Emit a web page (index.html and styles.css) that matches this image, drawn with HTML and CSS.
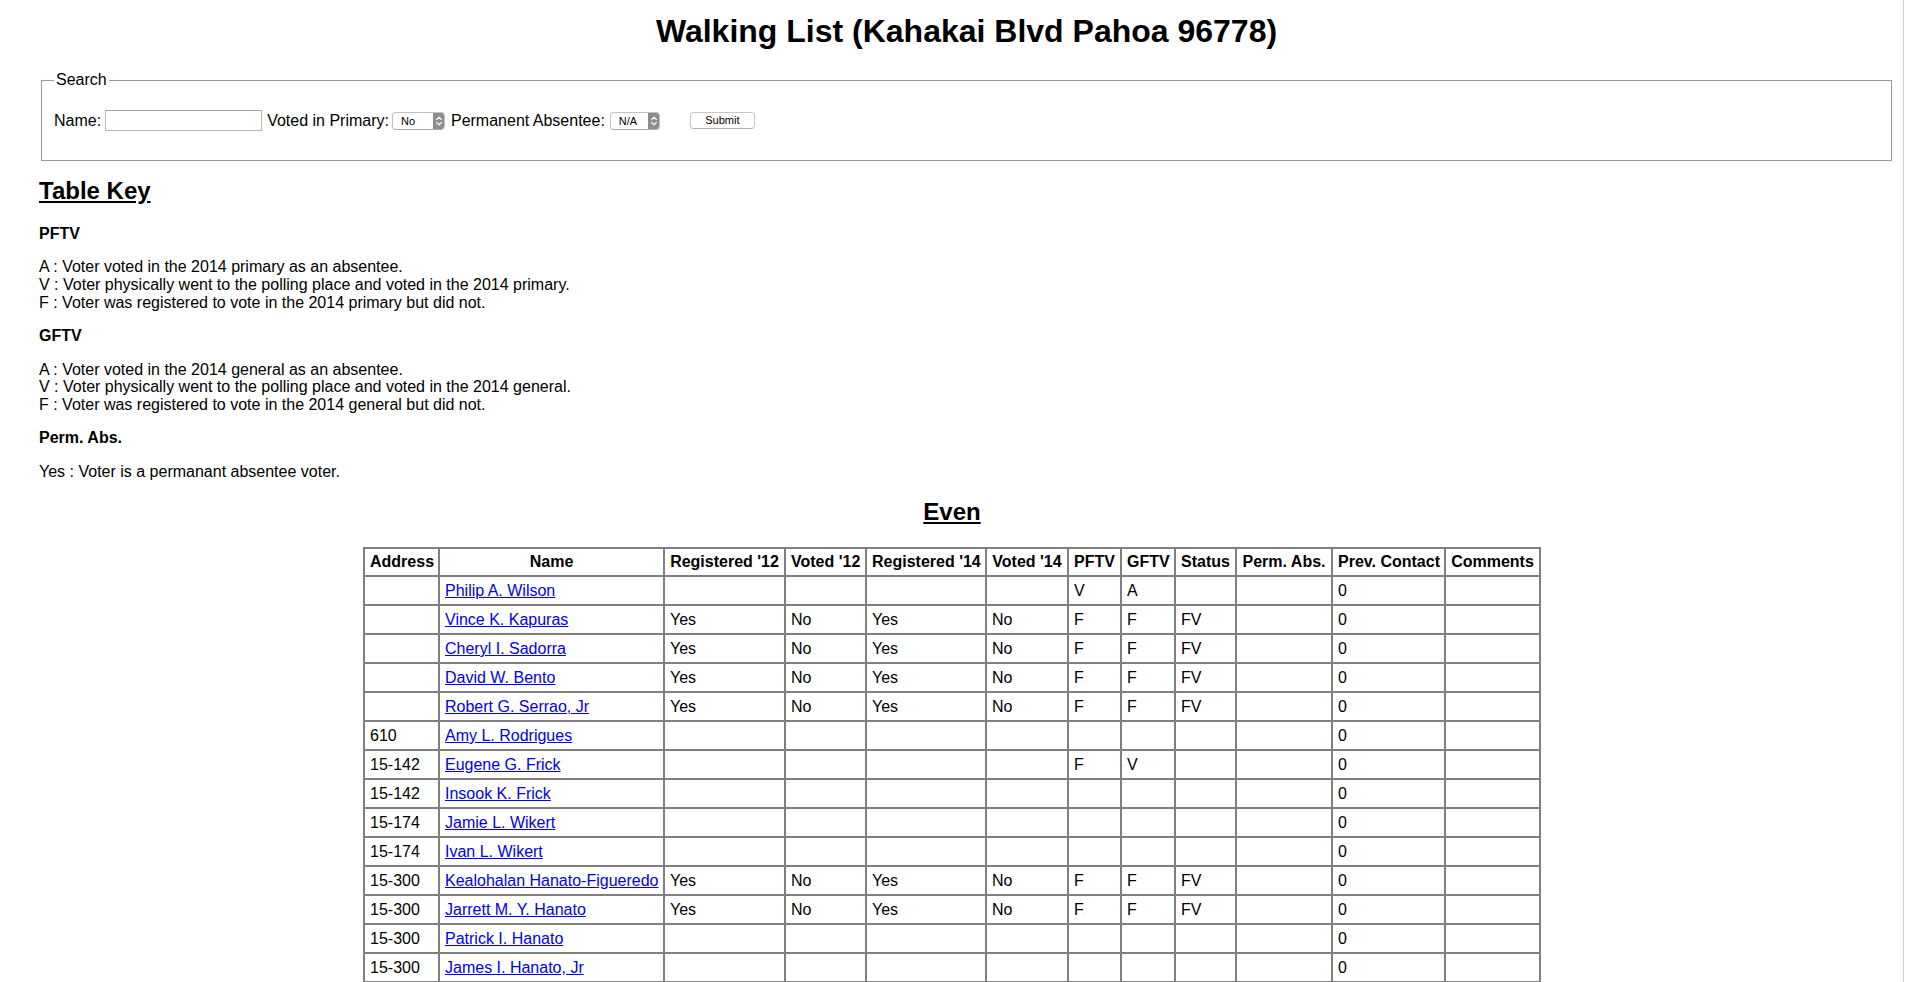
FILE: index.html
```html
<!DOCTYPE html>
<html lang="en">
<head>
<meta charset="utf-8">
<title>Walking List (Kahakai Blvd Pahoa 96778)</title>
<link rel="stylesheet" href="styles.css">
</head>
<body>
<div class="page">
  <h1 class="title">Walking List (Kahakai Blvd Pahoa 96778)</h1>

  <fieldset class="search">
    <legend>Search</legend>
    <form class="search-row" onsubmit="return false">
      <label class="lbl">Name:</label>
      <input class="name-input" type="text">
      <label class="lbl lbl-voted">Voted in Primary:</label>
      <span class="select sel-voted">
        <select><option>No</option><option>Yes</option></select>
        <span class="stepper"><svg width="12" height="18" viewBox="0 0 12 18"><path d="M3.5 7.6 L6 5.2 L8.5 7.6 M3.5 10.4 L6 12.8 L8.5 10.4" fill="none" stroke="#fff" stroke-width="1.2" stroke-linecap="round" stroke-linejoin="round"/></svg></span>
      </span>
      <label class="lbl lbl-perm">Permanent Absentee:</label>
      <span class="select sel-perm">
        <select><option>N/A</option><option>Yes</option><option>No</option></select>
        <span class="stepper"><svg width="12" height="18" viewBox="0 0 12 18"><path d="M3.5 7.6 L6 5.2 L8.5 7.6 M3.5 10.4 L6 12.8 L8.5 10.4" fill="none" stroke="#fff" stroke-width="1.2" stroke-linecap="round" stroke-linejoin="round"/></svg></span>
      </span>
      <button class="submit" type="submit">Submit</button>
    </form>
  </fieldset>

  <h2 class="key-title">Table Key</h2>
  <p class="term">PFTV</p>
  <p>A : Voter voted in the 2014 primary as an absentee.<br>V : Voter physically went to the polling place and voted in the 2014 primary.<br>F : Voter was registered to vote in the 2014 primary but did not.</p>
  <p class="term">GFTV</p>
  <p>A : Voter voted in the 2014 general as an absentee.<br>V : Voter physically went to the polling place and voted in the 2014 general.<br>F : Voter was registered to vote in the 2014 general but did not.</p>
  <p class="term">Perm. Abs.</p>
  <p>Yes : Voter is a permanant absentee voter.</p>

  <div class="table-wrap">
    <table class="walk">
      <caption>Even</caption>
      <thead>
        <tr>
          <th>Address</th><th>Name</th><th>Registered '12</th><th>Voted '12</th><th>Registered '14</th><th>Voted '14</th><th>PFTV</th><th>GFTV</th><th>Status</th><th>Perm. Abs.</th><th>Prev. Contact</th><th>Comments</th>
        </tr>
      </thead>
      <tbody>
        <tr><td></td><td><a href="#">Philip A. Wilson</a></td><td></td><td></td><td></td><td></td><td>V</td><td>A</td><td></td><td></td><td>0</td><td></td></tr>
        <tr><td></td><td><a href="#">Vince K. Kapuras</a></td><td>Yes</td><td>No</td><td>Yes</td><td>No</td><td>F</td><td>F</td><td>FV</td><td></td><td>0</td><td></td></tr>
        <tr><td></td><td><a href="#">Cheryl I. Sadorra</a></td><td>Yes</td><td>No</td><td>Yes</td><td>No</td><td>F</td><td>F</td><td>FV</td><td></td><td>0</td><td></td></tr>
        <tr><td></td><td><a href="#">David W. Bento</a></td><td>Yes</td><td>No</td><td>Yes</td><td>No</td><td>F</td><td>F</td><td>FV</td><td></td><td>0</td><td></td></tr>
        <tr><td></td><td><a href="#">Robert G. Serrao, Jr</a></td><td>Yes</td><td>No</td><td>Yes</td><td>No</td><td>F</td><td>F</td><td>FV</td><td></td><td>0</td><td></td></tr>
        <tr><td>610</td><td><a href="#">Amy L. Rodrigues</a></td><td></td><td></td><td></td><td></td><td></td><td></td><td></td><td></td><td>0</td><td></td></tr>
        <tr><td>15-142</td><td><a href="#">Eugene G. Frick</a></td><td></td><td></td><td></td><td></td><td>F</td><td>V</td><td></td><td></td><td>0</td><td></td></tr>
        <tr><td>15-142</td><td><a href="#">Insook K. Frick</a></td><td></td><td></td><td></td><td></td><td></td><td></td><td></td><td></td><td>0</td><td></td></tr>
        <tr><td>15-174</td><td><a href="#">Jamie L. Wikert</a></td><td></td><td></td><td></td><td></td><td></td><td></td><td></td><td></td><td>0</td><td></td></tr>
        <tr><td>15-174</td><td><a href="#">Ivan L. Wikert</a></td><td></td><td></td><td></td><td></td><td></td><td></td><td></td><td></td><td>0</td><td></td></tr>
        <tr><td>15-300</td><td><a href="#">Kealohalan Hanato-Figueredo</a></td><td>Yes</td><td>No</td><td>Yes</td><td>No</td><td>F</td><td>F</td><td>FV</td><td></td><td>0</td><td></td></tr>
        <tr><td>15-300</td><td><a href="#">Jarrett M. Y. Hanato</a></td><td>Yes</td><td>No</td><td>Yes</td><td>No</td><td>F</td><td>F</td><td>FV</td><td></td><td>0</td><td></td></tr>
        <tr><td>15-300</td><td><a href="#">Patrick I. Hanato</a></td><td></td><td></td><td></td><td></td><td></td><td></td><td></td><td></td><td>0</td><td></td></tr>
        <tr><td>15-300</td><td><a href="#">James I. Hanato, Jr</a></td><td></td><td></td><td></td><td></td><td></td><td></td><td></td><td></td><td>0</td><td></td></tr>
      </tbody>
    </table>
  </div>
</div>
</body>
</html>
```

FILE: styles.css
```css
html {
  scrollbar-width: none;
}
html::-webkit-scrollbar {
  display: none;
}
body {
  margin: 0;
  font-family: "Liberation Sans", Arial, Helvetica, sans-serif;
  font-size: 16px;
  line-height: 1.1;
  color: #000;
  background: #fff;
}
body::after {
  content: "";
  position: fixed;
  top: 0;
  bottom: 0;
  right: 2px;
  width: 1px;
  background: #d2d2d2;
}
.page {
  padding: 0 12px 0 39px;
}
.title {
  font-size: 32px;
  line-height: 36.8px;
  font-weight: bold;
  text-align: center;
  margin: 13px 0 21.44px;
}

/* search */
.search {
  margin: 0 2px;
  border: 1px solid #989898;
  padding: 5.6px 12px 13px;
}
.search legend {
  padding: 0 2px;
  font-size: 16px;
  line-height: 17.6px;
}
.search-row {
  display: flex;
  align-items: center;
  height: 21px;
  margin: 16px 0;
}
.lbl {
  white-space: nowrap;
}
.name-input {
  box-sizing: border-box;
  width: 157px;
  height: 21px;
  margin: 0 0 0 4px;
  padding: 1px 3px;
  border: 1px solid #b8b8b8;
  border-top-color: #a4a4a4;
  border-radius: 0;
  font: 13px "Liberation Sans", Arial, sans-serif;
  background: #fff;
}
.lbl-voted {
  margin-left: 5px;
}
.lbl-perm {
  margin-left: 6px;
}
.select {
  display: inline-flex;
  box-sizing: border-box;
  height: 18px;
  border: 1px solid #c2c2c2;
  border-bottom-color: #acacac;
  border-radius: 4px;
  background: #fff;
  overflow: hidden;
}
.sel-voted {
  width: 53px;
  margin-left: 3px;
}
.sel-perm {
  width: 50px;
  margin-left: 5px;
}
.select select {
  -webkit-appearance: none;
  appearance: none;
  flex: 1;
  min-width: 0;
  border: 0;
  margin: 0;
  padding: 0 0 0 8px;
  background: transparent;
  font: 11px "Liberation Sans", Arial, sans-serif;
  line-height: 16px;
  height: 16px;
  color: #000;
  outline: none;
}
.stepper {
  display: flex;
  align-items: center;
  justify-content: center;
  width: 12px;
  height: 18px;
  margin: -1px -1px -1px 0;
  background: #8d8d8d;
  border-radius: 0 4px 4px 0;
}
.stepper svg {
  display: block;
}
.submit {
  box-sizing: border-box;
  width: 65px;
  height: 17px;
  margin-left: 30px;
  padding: 0;
  border: 1px solid #c8c8c8;
  border-bottom-color: #b0b0b0;
  border-radius: 4px;
  background: #fff;
  font: 11px "Liberation Sans", Arial, sans-serif;
  line-height: 15px;
  color: #000;
}

/* key */
.key-title {
  font-size: 24px;
  line-height: 26.4px;
  font-weight: bold;
  text-decoration: underline;
  margin: 17px 0 19.92px;
}
p {
  margin: 16px 0;
}
.term {
  font-weight: bold;
}

/* table */
.table-wrap {
  display: flex;
  justify-content: center;
  padding-right: 29px;
}
.walk {
  table-layout: fixed;
  width: 1178px;
  border-collapse: separate;
  border-spacing: 0;
  border: 1px solid #808080;
}
.walk caption {
  font-size: 24px;
  line-height: 26.4px;
  font-weight: bold;
  text-decoration: underline;
  padding: 2px 0 22px;
}
.walk th,
.walk td {
  border: 1px solid #808080;
  padding: 4px 5px;
  line-height: 19px;
  white-space: nowrap;
  overflow: visible;
  text-align: left;
}
.walk th {
  padding: 3px 5px 4px;
  text-align: center;
  font-weight: bold;
}
.walk th:nth-child(1) { width: 63px; }
.walk th:nth-child(2) { width: 213px; }
.walk th:nth-child(3) { width: 109px; }
.walk th:nth-child(4) { width: 69px; }
.walk th:nth-child(5) { width: 108px; }
.walk th:nth-child(6) { width: 70px; }
.walk th:nth-child(7) { width: 41px; }
.walk th:nth-child(8) { width: 42px; }
.walk th:nth-child(9) { width: 49px; }
.walk th:nth-child(10) { width: 84px; }
.walk th:nth-child(11) { width: 101px; }
.walk th:nth-child(12) { width: 83px; }
.walk a {
  color: #0000ee;
  text-decoration: underline;
}
```
